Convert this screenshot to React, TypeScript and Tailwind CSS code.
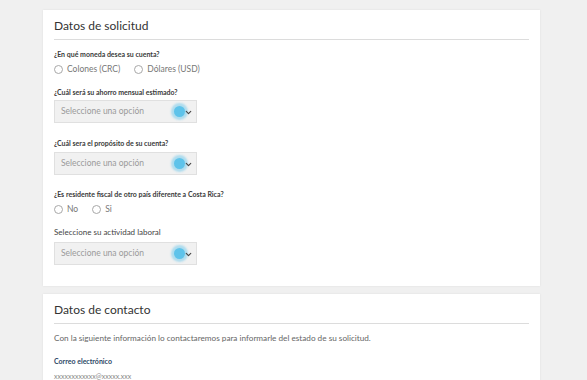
import { ChevronDown } from 'lucide-react'

const Radio = ({ label }: { label: string }) => (
  <label className="flex items-center gap-[4px]">
    <span className="w-[9px] h-[9px] rounded-full border border-[#a8a8a8] bg-white"></span>
    <span className="text-[8.5px] text-[#777]">{label}</span>
  </label>
)

const Select = () => (
  <div className="relative w-[143px] h-[23px] bg-[#f1f1f1] border border-[#e0e0e0] flex items-center pl-[6px]">
    <span className="text-[8.5px] text-[#9a9a9a]">Seleccione una opción</span>
    {/* focus glow over the select */}
    <span className="absolute left-[119px] top-[5px] w-[11px] h-[11px] rounded-full bg-[#5ec3ea] shadow-[0_0_2px_3px_rgba(94,195,234,0.45)]"></span>
    <ChevronDown className="absolute right-[3px] top-[7px] text-[#444]" size={9} strokeWidth={3} />
  </div>
)

const Question = ({ text, bold = true }: { text: string; bold?: boolean }) => (
  <p className={bold ? 'text-[7px] font-bold text-[#3a3a3a] leading-[10px]' : 'text-[8px] text-[#444] leading-[10px]'}>
    {text}
  </p>
)

export default function App() {
  return (
    <div className="h-[380px] overflow-hidden bg-[#f0f0f0] pt-[10px] pl-[43px]" style={{ fontFamily: 'Lato, sans-serif' }}>
      {/* Datos de solicitud */}
      <section className="w-[497px] bg-white shadow-[0_0_2px_rgba(0,0,0,0.08)] pl-[11px] pr-[11px] pt-[8px] pb-[21px]">
        <h2 className="text-[12px] leading-[16px] text-[#333]">Datos de solicitud</h2>
        <div className="h-px bg-[#dcdcdc] mt-[5px]"></div>

        <div className="mt-[9px]">
          <Question text="¿En qué moneda desea su cuenta?" />
          <div className="flex gap-[14px] mt-[4px]">
            <Radio label="Colones (CRC)" />
            <Radio label="Dólares (USD)" />
          </div>
        </div>

        <div className="mt-[11px]">
          <Question text="¿Cuál será su ahorro mensual estimado?" />
          <div className="mt-[3px]">
            <Select />
          </div>
        </div>

        <div className="mt-[15px]">
          <Question text="¿Cuál sera el propósito de su cuenta?" />
          <div className="mt-[4px]">
            <Select />
          </div>
        </div>

        <div className="mt-[14px]">
          <Question text="¿Es residente fiscal de otro país diferente a Costa Rica?" />
          <div className="flex gap-[14px] mt-[4px]">
            <Radio label="No" />
            <Radio label="Si" />
          </div>
        </div>

        <div className="mt-[11px]">
          <Question text="Seleccione su actividad laboral" bold={false} />
          <div className="mt-[5px]">
            <Select />
          </div>
        </div>
      </section>

      {/* Datos de contacto */}
      <section className="w-[497px] mt-[8px] bg-white shadow-[0_0_2px_rgba(0,0,0,0.08)] pl-[11px] pr-[11px] pt-[8px] pb-[20px]">
        <h2 className="text-[12px] leading-[16px] text-[#333]">Datos de contacto</h2>
        <div className="h-px bg-[#dcdcdc] mt-[5px]"></div>
        <p className="text-[8.2px] text-[#666] mt-[9px] leading-[10px]">
          Con la siguiente información lo contactaremos para informarle del estado de su solicitud.
        </p>
        <p className="text-[7px] font-bold text-[#2d4766] mt-[13px] leading-[10px]">Correo electrónico</p>
        <p className="text-[7px] text-[#888] mt-[5px] leading-[10px]">xxxxxxxxxxxx@xxxxx.xxx</p>
      </section>
    </div>
  )
}
